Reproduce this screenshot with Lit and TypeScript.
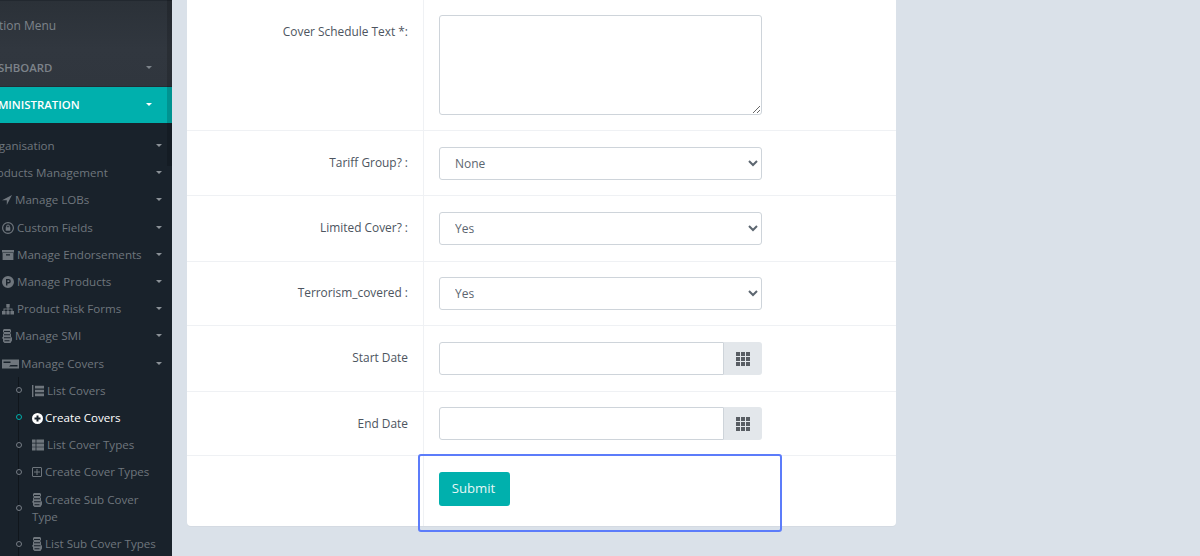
import { LitElement, html, css, svg } from "lit";
import { customElement } from "lit/decorators.js";

const icons: Record<string, { w: number; h: number; cls: string; d: unknown }> = {
  plane: { w: 10, h: 10, cls: "w10", d: svg`<path d="M10 0 L0 5.200 H4.800 V10 Z"/>` },
  lock: { w: 12, h: 12, cls: "w12", d: svg`<path fill-rule="evenodd" d="M6 0a6 6 0 1 0 0 12A6 6 0 0 0 6 0Zm0 1.200a4.800 4.800 0 1 1 0 9.600 4.800 4.800 0 0 1 0-9.600ZM4.200 5.300V4.400a1.800 1.800 0 0 1 3.600 0v.9h.5v3.500H3.700V5.300h.5Zm1 0h1.600v-.9a.8.800 0 0 0-1.600 0v.9Z"/>` },
  box: { w: 12, h: 12, cls: "w12", d: svg`<path fill-rule="evenodd" d="M0 1h12v2.500H0V1Zm.6 3h10.800v7H.6V4Zm3.400 1.200v1.300h4V5.200H4Z"/>` },
  p: { w: 12, h: 12, cls: "w12", d: svg`<path fill-rule="evenodd" d="M6 0a6 6 0 1 0 0 12A6 6 0 0 0 6 0ZM4 3h2.600a2.200 2.200 0 0 1 0 4.400H5.400V9.500H4V3Zm1.400 1.300v1.800h1.100a.9.900 0 0 0 0-1.800H5.400Z"/>` },
  sitemap: { w: 12, h: 12, cls: "w12", d: svg`<path d="M4.300 1h3.400v3.400H6.500v1.100h4V8h1.500v3.500H8.400V8h1.100V6.500h-3V8h1.100v3.500H4.400V8h1.100V6.500h-3V8h1.100v3.500H0V8h1.500V5.500h4V4.400H4.300V1Z"/>` },
  smi: { w: 10, h: 14, cls: "w10t", d: svg`<path fill-rule="evenodd" d="M2 0h6l1 1v2L8 4l1 1v2.500L10 9v2.500L8.500 14h-6L1 12.500V10L0 9l1-1.500V5l1-1-1-1V1l1-1Zm0 2v1h6V2H2Zm0 3.200v1h6v-1H2Zm0 3v1h6.500v-1H2Zm.5 3v1h5v-1h-5Z"/>` },
  money: { w: 17, h: 12, cls: "w17", d: svg`<path fill-rule="evenodd" d="M0 1.500h17v9H0v-9Zm1.500 2v1.500h7V3.500h-7Zm7 3.500L7 8.500h8.500V7h-7Z"/>` },
  listl: { w: 12, h: 12, cls: "w12", d: svg`<path d="M0 0h1.400v12H0V0Zm3 .8h9v2.600H3V.8Zm0 3.900h9v2.600H3V4.700Zm0 3.900h9v2.600H3V8.600Z"/>` },
  plus: { w: 11, h: 11, cls: "w11", d: svg`<path fill-rule="evenodd" d="M5.500 0a5.500 5.500 0 1 0 0 11 5.500 5.500 0 0 0 0-11ZM4.500 2.500h2v2h2v2h-2v2h-2v-2h-2v-2h2v-2Z"/>` },
  table: { w: 12, h: 12, cls: "w12", d: svg`<path d="M0 .5h3.600v3.300H0V.5Zm4.400 0H12v3.300H4.400V.5ZM0 4.400h3.600v3.300H0V4.400Zm4.400 0H12v3.300H4.400V4.400ZM0 8.300h3.600v3.200H0V8.300Zm4.400 0H12v3.200H4.400V8.300Z"/>` },
  plusbox: { w: 10, h: 10, cls: "w10", d: svg`<path fill-rule="evenodd" d="M1 0h8l1 1v8l-1 1H1L0 9V1l1-1Zm0 1v8h8V1H1Zm3.500 1h1v2.500H8v1H5.500V8h-1V5.500H2v-1h2.500V2Z"/>` },
};

const icon = (name: string) => {
  const i = icons[name];
  return html`<svg class="ic ${i.cls}" viewBox="0 0 ${i.w} ${i.h}" aria-hidden="true">${i.d}</svg>`;
};

const caret = html`<span class="caret"></span>`;

const level2 = [
  { label: "Organisation", cls: "off" },
  { label: "Products Management", cls: "off" },
  { label: "Manage LOBs", icon: "plane", cls: "in" },
  { label: "Custom Fields", icon: "lock", cls: "in" },
  { label: "Manage Endorsements", icon: "box", cls: "in" },
  { label: "Manage Products", icon: "p", cls: "in" },
  { label: "Product Risk Forms", icon: "sitemap", cls: "in" },
  { label: "Manage SMI", icon: "smi", cls: "in" },
  { label: "Manage Covers", icon: "money", cls: "in" },
];

const level3 = [
  { label: "List Covers", icon: "listl" },
  { label: "Create Covers", icon: "plus", active: true },
  { label: "List Cover Types", icon: "table" },
  { label: "Create Cover Types", icon: "plusbox" },
  { label: "Create Sub Cover Type", icon: "smi" },
  { label: "List Sub Cover Types", icon: "smi" },
];

@customElement("app-root")
export class AppRoot extends LitElement {
  static styles = css`
    :host {
      display: block;
      height: 556px;
      overflow: hidden;
      background: #dae1e9;
      font-family: "Open Sans", "Noto Sans", sans-serif;
      font-size: 12px;
    }
    * { box-sizing: border-box; }
    .page { display: flex; height: 556px; position: relative; }

    .side {
      width: 172px;
      flex: none;
      background: #19222b;
      color: #6f767d;
      font-size: 11.6px;
      overflow: hidden;
      position: relative;
    }
    .scroll {
      position: absolute;
      top: 0; right: 0;
      width: 5px; height: 166px;
      background: rgba(0, 0, 0, 0.16);
    }
    .top {
      height: 123px;
      background: linear-gradient(#2b3138, #31373f 40%, #2f353d);
      border-top: 1px solid #22282f;
      display: flex;
      flex-direction: column;
    }
    .caption {
      height: 50px;
      padding-top: 16px;
      margin-left: -39px;
      font-size: 12px;
      line-height: 18px;
      white-space: nowrap;
      color: #7d838a;
    }
    .main-item {
      display: flex;
      align-items: center;
      justify-content: space-between;
      padding: 0 20px 2px 0;
      font-weight: 600;
      font-size: 11.4px;
      white-space: nowrap;
    }
    .main-item .t { margin-left: -18px; }
    .dash { height: 36px; color: #7d838a; border-bottom: 1px solid #262d35; }
    .admin { height: 36px; background: #00b0ad; color: #fff; }
    .caret {
      flex: none;
      width: 0; height: 0;
      border-left: 3.5px solid transparent;
      border-right: 3.5px solid transparent;
      border-top: 3.5px solid currentColor;
    }
    .sub { padding-top: 9px; }
    .row2 {
      height: 27.2px;
      display: flex;
      align-items: center;
      justify-content: space-between;
      padding-right: 10px;
      white-space: nowrap;
    }
    .row2.off { margin-left: -15px; }
    .row2.in { padding-left: 2px; }
    .row2 .caret { color: #8b9197; }
    .ic { fill: currentColor; vertical-align: -2px; margin-right: 3px; }
    .w10 { width: 10px; height: 10px; vertical-align: -1px; }
    .w10t { width: 10px; height: 14px; vertical-align: -3px; }
    .w11 { width: 11px; height: 11px; margin-right: 2px; }
    .w12 { width: 12px; height: 12px; }
    .w17 { width: 17px; height: 12px; margin-right: 2px; }

    .tree { position: relative; }
    .tree::before {
      content: "";
      position: absolute;
      left: 18px; top: 0; bottom: -40px;
      width: 1px;
      background: #10161c;
    }
    .row3 {
      display: flex;
      align-items: center;
      padding: 5px 10px 5px 32px;
      position: relative;
      line-height: 17.2px;
    }
    .row3 .dot {
      position: absolute;
      left: 15.500px; top: 50%;
      width: 6px; height: 6px;
      margin-top: -3px;
      border: 1px solid #767d85;
      border-radius: 50%;
      background: #19222b;
    }
    .row3.active { color: #fff; }
    .row3.active .dot { border-color: #00b0ad; }

    .content { flex: 1; padding-left: 15px; min-width: 0; }
    .card {
      width: 709px;
      height: 526px;
      background: #fff;
      border-radius: 0 0 4px 4px;
      display: grid;
      grid-template-columns: 1fr;
      grid-template-rows: 131px 65px 66px 64px 66px 64px 70px;
      box-shadow: 0 1px 1px rgba(0, 0, 0, 0.03);
    }
    .row {
      display: grid;
      grid-template-columns: 237px 1fr;
      border-bottom: 1px solid #eff1f4;
    }
    .row:last-child { border-bottom: 0; }
    .label {
      border-right: 1px solid #eff1f4;
      text-align: right;
      font-size: 11.9px;
      padding: 22px 15px 0 0;
      color: #4d5560;
      line-height: 18px;
    }
    .field { padding: 16px 0 0 15px; }
    .row.first .field { padding-top: 15px; }
    .row.tight-field .field { padding-top: 15px; }
    .row.tight-label .label { padding-top: 21px; }
    textarea, select, input {
      display: block;
      font: inherit;
      color: #5c6670;
      background: #fff;
      border: 1px solid #ced4da;
      border-radius: 3px;
      outline: none;
    }
    textarea { width: 323px; height: 100px; }
    select { width: 323px; height: 33px; padding: 0 0 0 11px; }
    .group { display: flex; width: 323px; height: 33px; }
    .group input { flex: 1; min-width: 0; border-radius: 3px 0 0 3px; }
    .addon {
      width: 38px;
      background: #e3e7eb;
      border-radius: 0 3px 3px 0;
      display: flex;
      align-items: center;
      justify-content: center;
    }
    .addon svg { width: 14px; height: 14px; fill: #585d63; }
    button {
      display: block;
      font: inherit;
      font-size: 13.200px;
      width: 71px;
      height: 34px;
      padding: 0 2px 2px 0;
      color: #e6f7f6;
      background: #00b0ad;
      border: 0;
      border-radius: 3px;
    }
    .highlight {
      position: absolute;
      left: 418px; top: 454px;
      width: 364px; height: 78px;
      border: 2px solid #5c7cfa;
      border-radius: 3px;
      pointer-events: none;
    }
  `;

  private grid() {
    const cells = [];
    for (let r = 0; r < 3; r++)
      for (let c = 0; c < 3; c++)
        cells.push(svg`<rect x="${c * 5}" y="${r * 5}" width="4" height="4"/>`);
    return html`<svg viewBox="0 0 14 14" aria-hidden="true">${cells}</svg>`;
  }

  private selectRow(label: string, value: string, extra: string[], cls = "") {
    return html`<div class="row ${cls}">
      <div class="label">${label}</div>
      <div class="field">
        <select>
          <option>${value}</option>
          ${extra.map((o) => html`<option>${o}</option>`)}
        </select>
      </div>
    </div>`;
  }

  private dateRow(label: string, cls = "") {
    return html`<div class="row ${cls}">
      <div class="label">${label}</div>
      <div class="field">
        <div class="group"><input type="text" /><div class="addon">${this.grid()}</div></div>
      </div>
    </div>`;
  }

  render() {
    return html`<div class="page">
      <aside class="side">
        <div class="top">
          <div class="caption">Navigation Menu</div>
          <div class="main-item dash"><span class="t">DASHBOARD</span>${caret}</div>
          <div class="main-item admin"><span class="t">ADMINISTRATION</span>${caret}</div>
        </div>
        <div class="sub">
          ${level2.map(
            (i) => html`<div class="row2 ${i.cls}">
              <span>${i.icon ? icon(i.icon) : ""}${i.label}</span>${caret}
            </div>`
          )}
          <div class="tree">
            ${level3.map(
              (i) => html`<div class="row3 ${i.active ? "active" : ""}">
                <span class="dot"></span>
                <span>${icon(i.icon)}${i.label}</span>
              </div>`
            )}
          </div>
        </div>
        <div class="scroll"></div>
      </aside>
      <main class="content">
        <div class="card">
          <div class="row first">
            <div class="label">Cover Schedule Text *:</div>
            <div class="field"><textarea></textarea></div>
          </div>
          ${this.selectRow("Tariff Group? :", "None", ["Group A"])}
          ${this.selectRow("Limited Cover? :", "Yes", ["No"])}
          ${this.selectRow("Terrorism_covered :", "Yes", ["No"], "tight-field tight-label")}
          ${this.dateRow("Start Date")}
          ${this.dateRow("End Date", "tight-field")}
          <div class="row">
            <div class="label"></div>
            <div class="field"><button>Submit</button></div>
          </div>
        </div>
      </main>
      <div class="highlight"></div>
    </div>`;
  }
}
